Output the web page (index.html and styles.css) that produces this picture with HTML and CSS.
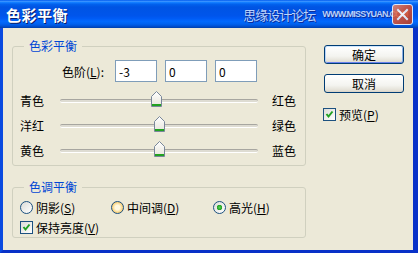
FILE: index.html
```html
<!DOCTYPE html>
<html lang="zh-CN">
<head>
  <meta charset="UTF-8" />
  <title>色彩平衡</title>
  <link rel="stylesheet" href="styles.css">
</head>
<body>

<div class="window">
  <div class="titlebar">
    <span class="title">色彩平衡</span>
    <span class="mark">思缘设计论坛</span>
    <span class="mark-url">WWW.MISSYUAN.COM</span>
    <span class="close">
      <svg width="13" height="13" viewBox="0 0 13 13"><path d="M2 2 L11 11 M11 2 L2 11" stroke="#fff" stroke-width="2" stroke-linecap="square"/></svg>
    </span>
  </div>

  <div class="client">
    <div class="main">
      <fieldset class="group group-color">
        <legend>色彩平衡</legend>
        <div class="levels">
          <label>色阶(<u>L</u>):</label>
          <input class="field" type="text" value="-3">
          <input class="field" type="text" value="0">
          <input class="field" type="text" value="0">
        </div>

        <div class="slider-row">
          <span class="lbl">青色</span>
          <div class="track"><span class="thumb" style="left: calc(50% - 3px)"></span></div>
          <span class="lbl lbl-right">红色</span>
        </div>
        <div class="slider-row">
          <span class="lbl">洋红</span>
          <div class="track"><span class="thumb" style="left: 50%"></span></div>
          <span class="lbl lbl-right">绿色</span>
        </div>
        <div class="slider-row">
          <span class="lbl">黄色</span>
          <div class="track"><span class="thumb" style="left: 50%"></span></div>
          <span class="lbl lbl-right">蓝色</span>
        </div>
      </fieldset>

      <fieldset class="group group-tone">
        <legend>色调平衡</legend>
        <div class="radios">
          <span class="opt opt-1"><span class="radio"></span>阴影(<u>S</u>)</span>
          <span class="opt opt-2"><span class="radio hot"></span>中间调(<u>D</u>)</span>
          <span class="opt"><span class="radio on"></span>高光(<u>H</u>)</span>
        </div>
        <div class="check-row">
          <span class="check on"></span>保持亮度(<u>V</u>)
        </div>
      </fieldset>
    </div>

    <div class="side">
      <button class="btn btn-default">确定</button>
      <button class="btn">取消</button>
      <div class="check-row preview">
        <span class="check on"></span>预览(<u>P</u>)
      </div>
    </div>
  </div>
</div>

</body>
</html>
```

FILE: styles.css
```css
body {
  margin: 0;
  font-family: "Noto Sans CJK SC", "Liberation Sans", sans-serif;
  font-size: 12px;
  color: #000;
  background: #fff;
}
.window {
  width: 418px;
  height: 253px;
  display: flex;
  flex-direction: column;
  background: #ece9d8;
}

/* title bar */
.titlebar {
  position: relative;
  height: 28px;
  display: flex;
  align-items: center;
  padding: 0 10px 0 6px;
  background: linear-gradient(#0058ee 0%, #3a93ff 5%, #127dff 9%, #0262ee 15%, #0054e3 25%, #0055eb 56%, #005bf5 66%, #026afe 76%, #0062ef 86%, #0052d6 93%, #0040ab 100%);
}
.title {
  color: #fff;
  font-weight: bold;
  font-size: 15px;
  letter-spacing: 0.5px;
  text-shadow: 1px 1px 0 #0a1e6e;
}
.mark {
  margin-left: auto;
  color: #b8d4ff;
  font-size: 13px;
  letter-spacing: -1px;
  text-shadow: 0 0 1px #0c2f9e, 1px 1px 0 #0c2f9e;
}
.mark-url {
  margin-left: 7px;
  white-space: nowrap;
  color: #b8d4ff;
  font-family: "Liberation Sans", sans-serif;
  font-size: 9px;
  font-weight: bold;
  letter-spacing: -0.8px;
  text-shadow: 0 0 1px #0c2f9e, 1px 1px 0 #0c2f9e;
}
.close {
  position: absolute;
  right: 5px;
  top: 4px;
  width: 19px;
  height: 19px;
  border: 1px solid #fff;
  border-radius: 3px;
  background: linear-gradient(135deg, #f08c6c, #e0532f 45%, #c23a18);
  display: flex;
  align-items: center;
  justify-content: center;
  opacity: 0.85;
}

/* client area */
.client {
  flex: 1;
  display: flex;
  border-left: 3px solid #0a4ae0;
  border-right: 5px solid #0831c8;
  border-bottom: 3px solid #0831c8;
}
.main {
  margin-left: 9px;
  width: 294px;
}
.group {
  margin: 0;
  padding: 0;
  border: 1px solid #d0d0bf;
  border-radius: 3px;
}
.group legend {
  margin-left: 11px;
  padding: 0 5px;
  color: #0046d5;
  line-height: 14px;
}
.group-color {
  margin-top: 11px;
  padding-bottom: 2px;
}
.group-tone {
  margin-top: 14px;
  padding-bottom: 2px;
}

.levels {
  display: flex;
  align-items: center;
  margin: 7px 0 6px;
  padding-left: 49px;
  gap: 8px;
}
.levels label {
  width: 45px;
}
.field {
  width: 42px;
  height: 22px;
  box-sizing: border-box;
  border: 1px solid #7f9db9;
  background: #fff;
  font-family: "Noto Sans CJK SC", sans-serif;
  font-size: 12px;
  padding: 0 3px;
  margin: 0;
}

.slider-row {
  display: flex;
  align-items: center;
  height: 25px;
  padding-left: 7px;
}
.lbl {
  width: 25px;
}
.lbl-right {
  margin-left: 14px;
}
.track {
  position: relative;
  margin-left: 15px;
  width: 198px;
  height: 2px;
  border-top: 1px solid #a7a6a0;
  border-bottom: 1px solid #fff;
  border-radius: 2px;
  background: #dedcd2;
}
.thumb {
  position: absolute;
  top: -9px;
  width: 11px;
  height: 16px;
  margin-left: -5px;
  background: url("data:image/svg+xml,%3Csvg xmlns='http://www.w3.org/2000/svg' width='11' height='16'%3E%3Cdefs%3E%3ClinearGradient id='g' x1='0' y1='0' x2='0' y2='1'%3E%3Cstop offset='0' stop-color='%23ffffff'/%3E%3Cstop offset='1' stop-color='%23e6e4da'/%3E%3C/linearGradient%3E%3C/defs%3E%3Cpath d='M0.5 5.5 L5.5 0.5 L10.5 5.5 L10.5 15.5 L0.5 15.5 Z' fill='url(%23g)' stroke='%2379879a'/%3E%3Cpath d='M1 13.5 H10 M1 14.5 H10' stroke='%2321a121'/%3E%3C/svg%3E") no-repeat;
}

.radios {
  display: flex;
  align-items: center;
  height: 16px;
  margin-top: 5px;
  padding-left: 7px;
}
.opt {
  display: flex;
  align-items: center;
}
.opt-1 { width: 91px; }
.opt-2 { width: 102px; }
.radio {
  width: 11px;
  height: 11px;
  border: 1px solid #1c5180;
  border-radius: 50%;
  margin-right: 3px;
  background: linear-gradient(135deg, #dcdcd7, #fff);
  box-sizing: content-box;
}
.radio.hot {
  background: radial-gradient(circle, #fff8e0 30%, #fbd98b 60%, #e8a43c 100%);
}
.radio.on {
  background: radial-gradient(circle, #55d055 0, #21a121 2.5px, transparent 3px), linear-gradient(135deg, #dcdcd7, #fff);
}

.check-row {
  display: flex;
  align-items: center;
  height: 16px;
  margin-top: 4px;
  padding-left: 7px;
}
.check {
  width: 11px;
  height: 11px;
  border: 1px solid #1c5180;
  margin-right: 3px;
  background: linear-gradient(135deg, #dcdcd7, #fff);
}
.check.on {
  background: url("data:image/svg+xml,%3Csvg xmlns='http://www.w3.org/2000/svg' width='11' height='11'%3E%3Cpath d='M2.5 5 L4.5 7.5 L8.5 2.5' fill='none' stroke='%2321a121' stroke-width='2'/%3E%3C/svg%3E") no-repeat, linear-gradient(135deg, #dcdcd7, #fff);
}

/* right column */
.side {
  margin-left: 18px;
  width: 80px;
  display: flex;
  flex-direction: column;
}
.btn {
  height: 19px;
  margin: 0;
  padding: 0;
  border: 1px solid #003c74;
  border-radius: 3px;
  background: linear-gradient(#fff, #f4f4f0 60%, #e3e0d6 90%, #d6d0c5);
  font-family: "Noto Sans CJK SC", sans-serif;
  font-size: 12px;
  line-height: 17px;
  color: #000;
}
.btn-default {
  margin-top: 17px;
  box-shadow: inset 0 1px 0 #cee7ff, inset 1px 0 0 #b7d3f8, inset -1px 0 0 #89ade4, inset 0 -1px 0 #6982ee;
}
.btn + .btn {
  margin-top: 10px;
}
.preview {
  margin-top: 13px;
  padding-left: 0;
  margin-left: -1px;
}
```
